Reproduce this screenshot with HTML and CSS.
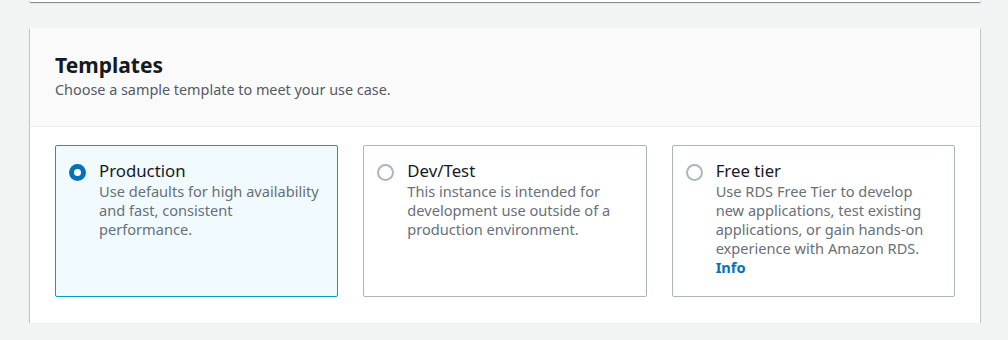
FILE: index.html
```html
<!DOCTYPE html>
<html>
	<head>
		<meta charset="utf-8">
		<title>Templates</title>
		<link rel="stylesheet" href="styles.css">
	</head>
	<body>
		<div class="page">
			<div class="container prev"></div>

			<div class="container">
				<!--header-->
				<div class="header">
					<h2 class="title">Templates</h2>
					<p class="desc">Choose a sample template to meet your use case.</p>
				</div>

				<!--tiles-->
				<div class="content">
					<div class="tiles">
						<label class="tile selected">
							<span class="radio checked"></span>
							<span class="tile-text">
								<span class="tile-title">Production</span>
								<span class="tile-desc">Use defaults for high availability and fast, consistent performance.</span>
							</span>
						</label>
						<label class="tile">
							<span class="radio"></span>
							<span class="tile-text">
								<span class="tile-title">Dev/Test</span>
								<span class="tile-desc">This instance is intended for development use outside of a production environment.</span>
							</span>
						</label>
						<label class="tile">
							<span class="radio"></span>
							<span class="tile-text">
								<span class="tile-title">Free tier</span>
								<span class="tile-desc">Use RDS Free Tier to develop new applications, test existing applications, or gain hands-on experience with Amazon RDS.</span>
								<a href="#" class="info">Info</a>
							</span>
						</label>
					</div>
				</div>
			</div>
		</div>
	</body>
</html>
```

FILE: styles.css
```css
* {
	margin: 0;
	padding: 0;
	box-sizing: border-box;
}

body {
	background: #f2f3f3;
	font-family: "Noto Sans", "Open Sans", Arial, sans-serif;
	color: #16191f;
}

.page {
	padding: 0 28px 0 30px;
	display: flex;
	flex-direction: column;
	gap: 26px;
}

.container {
	background: #fff;
	box-shadow: 0 1px 1px 0 rgba(0, 28, 36, 0.3), 1px 1px 1px 0 rgba(0, 28, 36, 0.15), -1px 1px 1px 0 rgba(0, 28, 36, 0.15);
}

.container.prev {
	height: 2px;
}

.header {
	background: #fafafa;
	border-bottom: 1px solid #eaeded;
	padding: 24px 25px 26px;
}

.title {
	font-size: 21px;
	font-weight: 700;
	line-height: 27px;
	color: #16191f;
}

.desc {
	font-size: 14.4px;
	line-height: 21px;
	color: #545b64;
}

.content {
	padding: 18px 25px 26px;
}

.tiles {
	display: grid;
	grid-template-columns: repeat(3, 1fr);
	gap: 25px;
}

.tile {
	display: flex;
	gap: 13px;
	height: 152px;
	padding: 14px 13px;
	border: 1px solid #aab7b8;
	border-radius: 2px;
	background: #fff;
	cursor: pointer;
}

.tile.selected {
	background: #f1faff;
	border-color: #00a1c9;
}

.radio {
	flex: none;
	width: 17px;
	height: 17px;
	margin-top: 4px;
	border: 2px solid #aab7b8;
	border-radius: 50%;
	background: #fff;
}

.radio.checked {
	border: 5px solid #0073bb;
}

.tile-text {
	display: flex;
	flex-direction: column;
}

.tile-title {
	font-size: 16.8px;
	line-height: 22px;
	color: #16191f;
}

.tile-desc {
	font-size: 14.6px;
	line-height: 19px;
	color: #687078;
}

.info {
	font-size: 14.6px;
	line-height: 19px;
	font-weight: 700;
	color: #0073bb;
	text-decoration: none;
}
```
